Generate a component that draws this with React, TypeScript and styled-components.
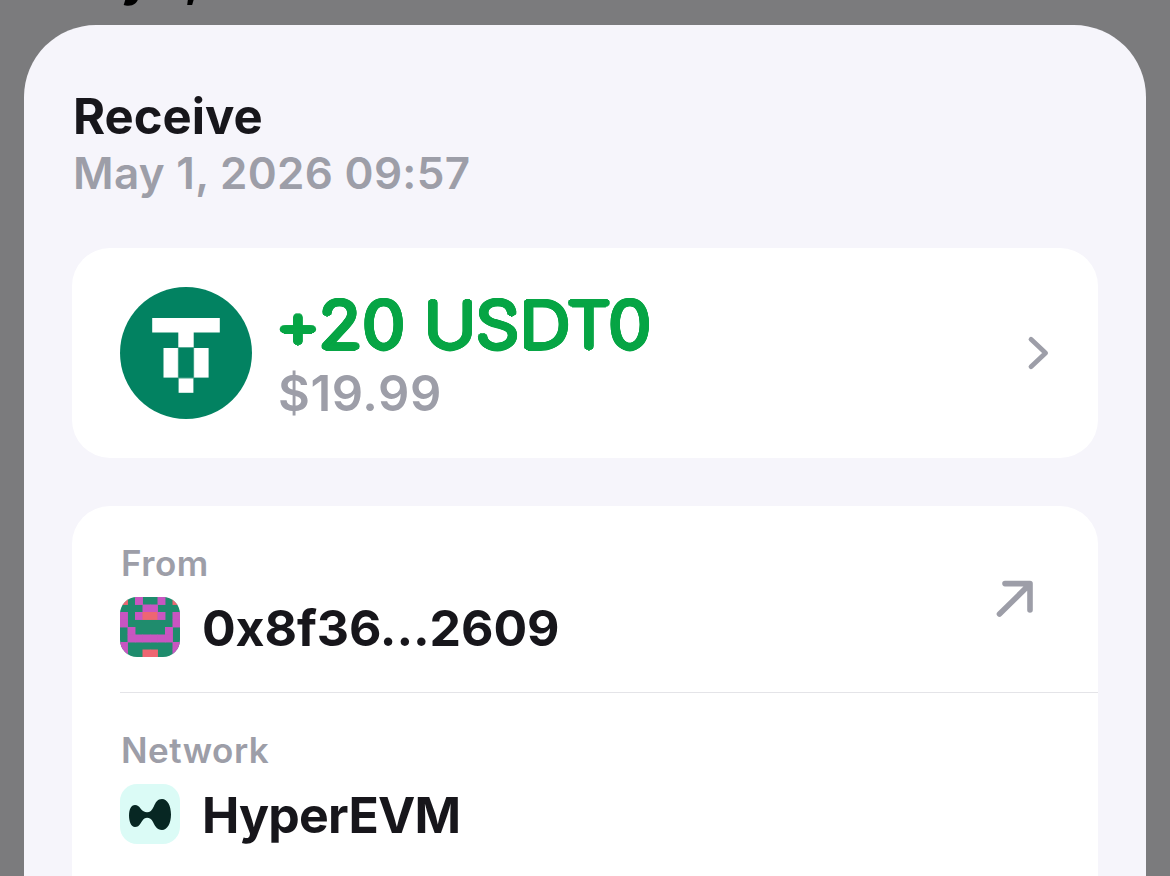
import styled, { createGlobalStyle } from "styled-components";

const GlobalStyle = createGlobalStyle`
  * {
    box-sizing: border-box;
  }
  body {
    margin: 0;
    height: 876px;
    overflow: hidden;
    background: #7b7b7d;
    font-family: Inter, "Liberation Sans", sans-serif;
  }
`;

const Screen = styled.div`
  width: 1170px;
  height: 876px;
  overflow: hidden;
`;

const Behind = styled.div`
  height: 25px;
  padding-left: 46px;
  display: flex;
  align-items: flex-end;
  overflow: hidden;
`;

const BehindDate = styled.div`
  margin-bottom: 18px;
  color: #000;
  font-size: 50px;
  font-weight: 700;
  line-height: 60px;
  white-space: nowrap;
`;

const Sheet = styled.main`
  height: 1000px;
  margin: 0 24px;
  padding: 62px 48px 0;
  background: #f6f5fb;
  border-radius: 72px 72px 0 0;
`;

const Header = styled.header`
  height: 161px;
  padding-left: 1px;
`;

const Title = styled.h1`
  margin: 0;
  color: #17161b;
  font-size: 49px;
  font-weight: 700;
  line-height: 60px;
`;

const Time = styled.div`
  margin-top: -1px;
  color: #9d9ea8;
  font-size: 44px;
  font-weight: 600;
  line-height: 54px;
  letter-spacing: 0.3px;
`;

const Card = styled.section`
  background: #fff;
  border-radius: 38px;
`;

const TokenCard = styled(Card)`
  height: 210px;
  padding: 0 48px;
  display: flex;
  align-items: center;
`;

const TokenText = styled.div`
  flex: 1;
  padding-left: 24px;
`;

// thin letters thickened by a ring of shadows, which rounds their ends
const ring = [3.5, 1.9]
  .flatMap((r) =>
    Array.from({ length: 24 }, (_, i) => {
      const a = (i * Math.PI) / 12;
      return `${(r * Math.cos(a)).toFixed(2)}px ${(r * Math.sin(a)).toFixed(2)}px 0.4px #07a545`;
    })
  )
  .join(", ");

const Amount = styled.div`
  padding-top: 5px;
  color: #07a545;
  font-size: 62px;
  font-weight: 100;
  line-height: 76px;
  letter-spacing: 1.4px;
  word-spacing: -1px;
  white-space: nowrap;
  text-shadow: ${ring};
  transform: scaleX(1.11);
  transform-origin: left;
`;

const Fiat = styled.div`
  margin-top: 1px;
  padding-left: 2px;
  color: #9d9ea8;
  font-size: 49px;
  font-weight: 600;
  line-height: 60px;
  letter-spacing: 0.6px;
`;

const Details = styled(Card)`
  height: 500px;
  margin-top: 48px;
  padding-left: 48px;
`;

const Row = styled.div<{ $divided?: boolean }>`
  height: 187px;
  padding: 36px 64px 0 0;
  display: flex;
  justify-content: space-between;
  border-bottom: ${(props) => (props.$divided ? "1px solid #e4e4e8" : "none")};
`;

const Label = styled.div`
  padding-left: 1px;
  color: #9d9ea8;
  font-size: 35px;
  font-weight: 600;
  line-height: 42px;
  letter-spacing: 0.5px;
`;

const Value = styled.div<{ $spacing: number }>`
  height: 60px;
  margin-top: 13px;
  display: flex;
  align-items: center;
  gap: 22px;
  color: #17161b;
  font-size: 50px;
  font-weight: 700;
  letter-spacing: ${(props) => props.$spacing}px;
  span {
    padding-top: 2px;
  }
`;

const Avatar = styled.svg`
  width: 60px;
  height: 60px;
  border-radius: 17px;
`;

const ArrowIcon = styled.svg`
  margin-top: 37px;
`;

const G = "#1f8c6d";
const M = "#c955c1";
const R = "#ee6672";

// left half of each row, the right half is mirrored
const blocks = [
  [R, G, M, G],
  [G, G, G, M],
  [M, G, M, R],
  [M, G, G, G],
  [G, M, G, G],
  [G, M, M, M],
  [M, G, G, G],
  [M, G, G, R],
];

const Blockie = () => (
  <Avatar viewBox="0 0 8 8">
    <rect width="8" height="8" fill={G} />
    {blocks.map((row, y) =>
      [...row, ...[...row].reverse()].map((color, x) =>
        color === G ? null : (
          <rect
            key={`${x}-${y}`}
            x={x}
            y={y}
            width="1.06"
            height="1.06"
            fill={color}
          />
        )
      )
    )}
  </Avatar>
);

const TokenIcon = () => (
  <svg width="132" height="132" viewBox="0 0 132 132">
    <circle cx="66" cy="66" r="66" fill="#028261" />
    <g fill="#fff">
      <path d="M32.2 31H99.8V45.6H73.7V60.3H58.3V45.6H32.2Z" />
      <rect x="43.5" y="61" width="14.5" height="29.6" />
      <rect x="74" y="61" width="14.6" height="29.6" />
      <rect x="58.6" y="91.2" width="14.8" height="14.6" />
    </g>
    <path
      d="M58.3 60.5H73.7M58.3 60.5V91H73.7V60.5"
      fill="none"
      stroke="#5dae98"
      strokeWidth="0.8"
    />
  </svg>
);

const HyperIcon = () => (
  <Avatar viewBox="0 0 60 60">
    <rect width="60" height="60" fill="#dbfbf6" />
    <path
      fill="#072723"
      d="M51 30.5C51 39 47.5 46 42 46C37 46 35 42 33 38C31.5 35 29.5 33.7 27 33.7C24 33.7 22.3 36.5 20.5 39.5C19 42 17.5 43 15 43C11 43 9 37.5 9 31.5C9 25.5 11 21 15 21C17.5 21 19 22.5 20.5 24.5C22.5 27 24.5 28.3 27 28.3C30 28.3 32 26.5 33.8 22.5C35.5 18.5 37.5 15 42 15C47.5 15 51 22 51 30.5Z"
    />
  </Avatar>
);

const Chevron = () => (
  <svg width="24" height="36" viewBox="0 0 24 36" fill="none">
    <path
      d="M5 4.3L19.6 18L5 31.7"
      stroke="#9d9ea8"
      strokeWidth="4.8"
      strokeLinecap="round"
      strokeLinejoin="round"
    />
  </svg>
);

const App = () => {
  return (
    <Screen>
      <GlobalStyle />
      <Behind>
        <BehindDate>May 1, 2026</BehindDate>
      </Behind>
      <Sheet>
        <Header>
          <Title>Receive</Title>
          <Time>May 1, 2026 09:57</Time>
        </Header>
        <TokenCard>
          <TokenIcon />
          <TokenText>
            <Amount>+20 USDT0</Amount>
            <Fiat>$19.99</Fiat>
          </TokenText>
          <Chevron />
        </TokenCard>
        <Details>
          <Row $divided>
            <div>
              <Label>From</Label>
              <Value $spacing={-0.1}>
                <Blockie />
                <span>0x8f36...2609</span>
              </Value>
            </div>
            <ArrowIcon width="40" height="40" viewBox="0 0 40 40" fill="none">
              <path
                d="M5.5 35L35 6M11 4.6H36V31"
                stroke="#9d9ea8"
                strokeWidth="5.6"
                strokeLinecap="round"
                strokeLinejoin="round"
              />
            </ArrowIcon>
          </Row>
          <Row>
            <div>
              <Label>Network</Label>
              <Value $spacing={-0.8}>
                <HyperIcon />
                <span>HyperEVM</span>
              </Value>
            </div>
          </Row>
        </Details>
      </Sheet>
    </Screen>
  );
};

export default App;
